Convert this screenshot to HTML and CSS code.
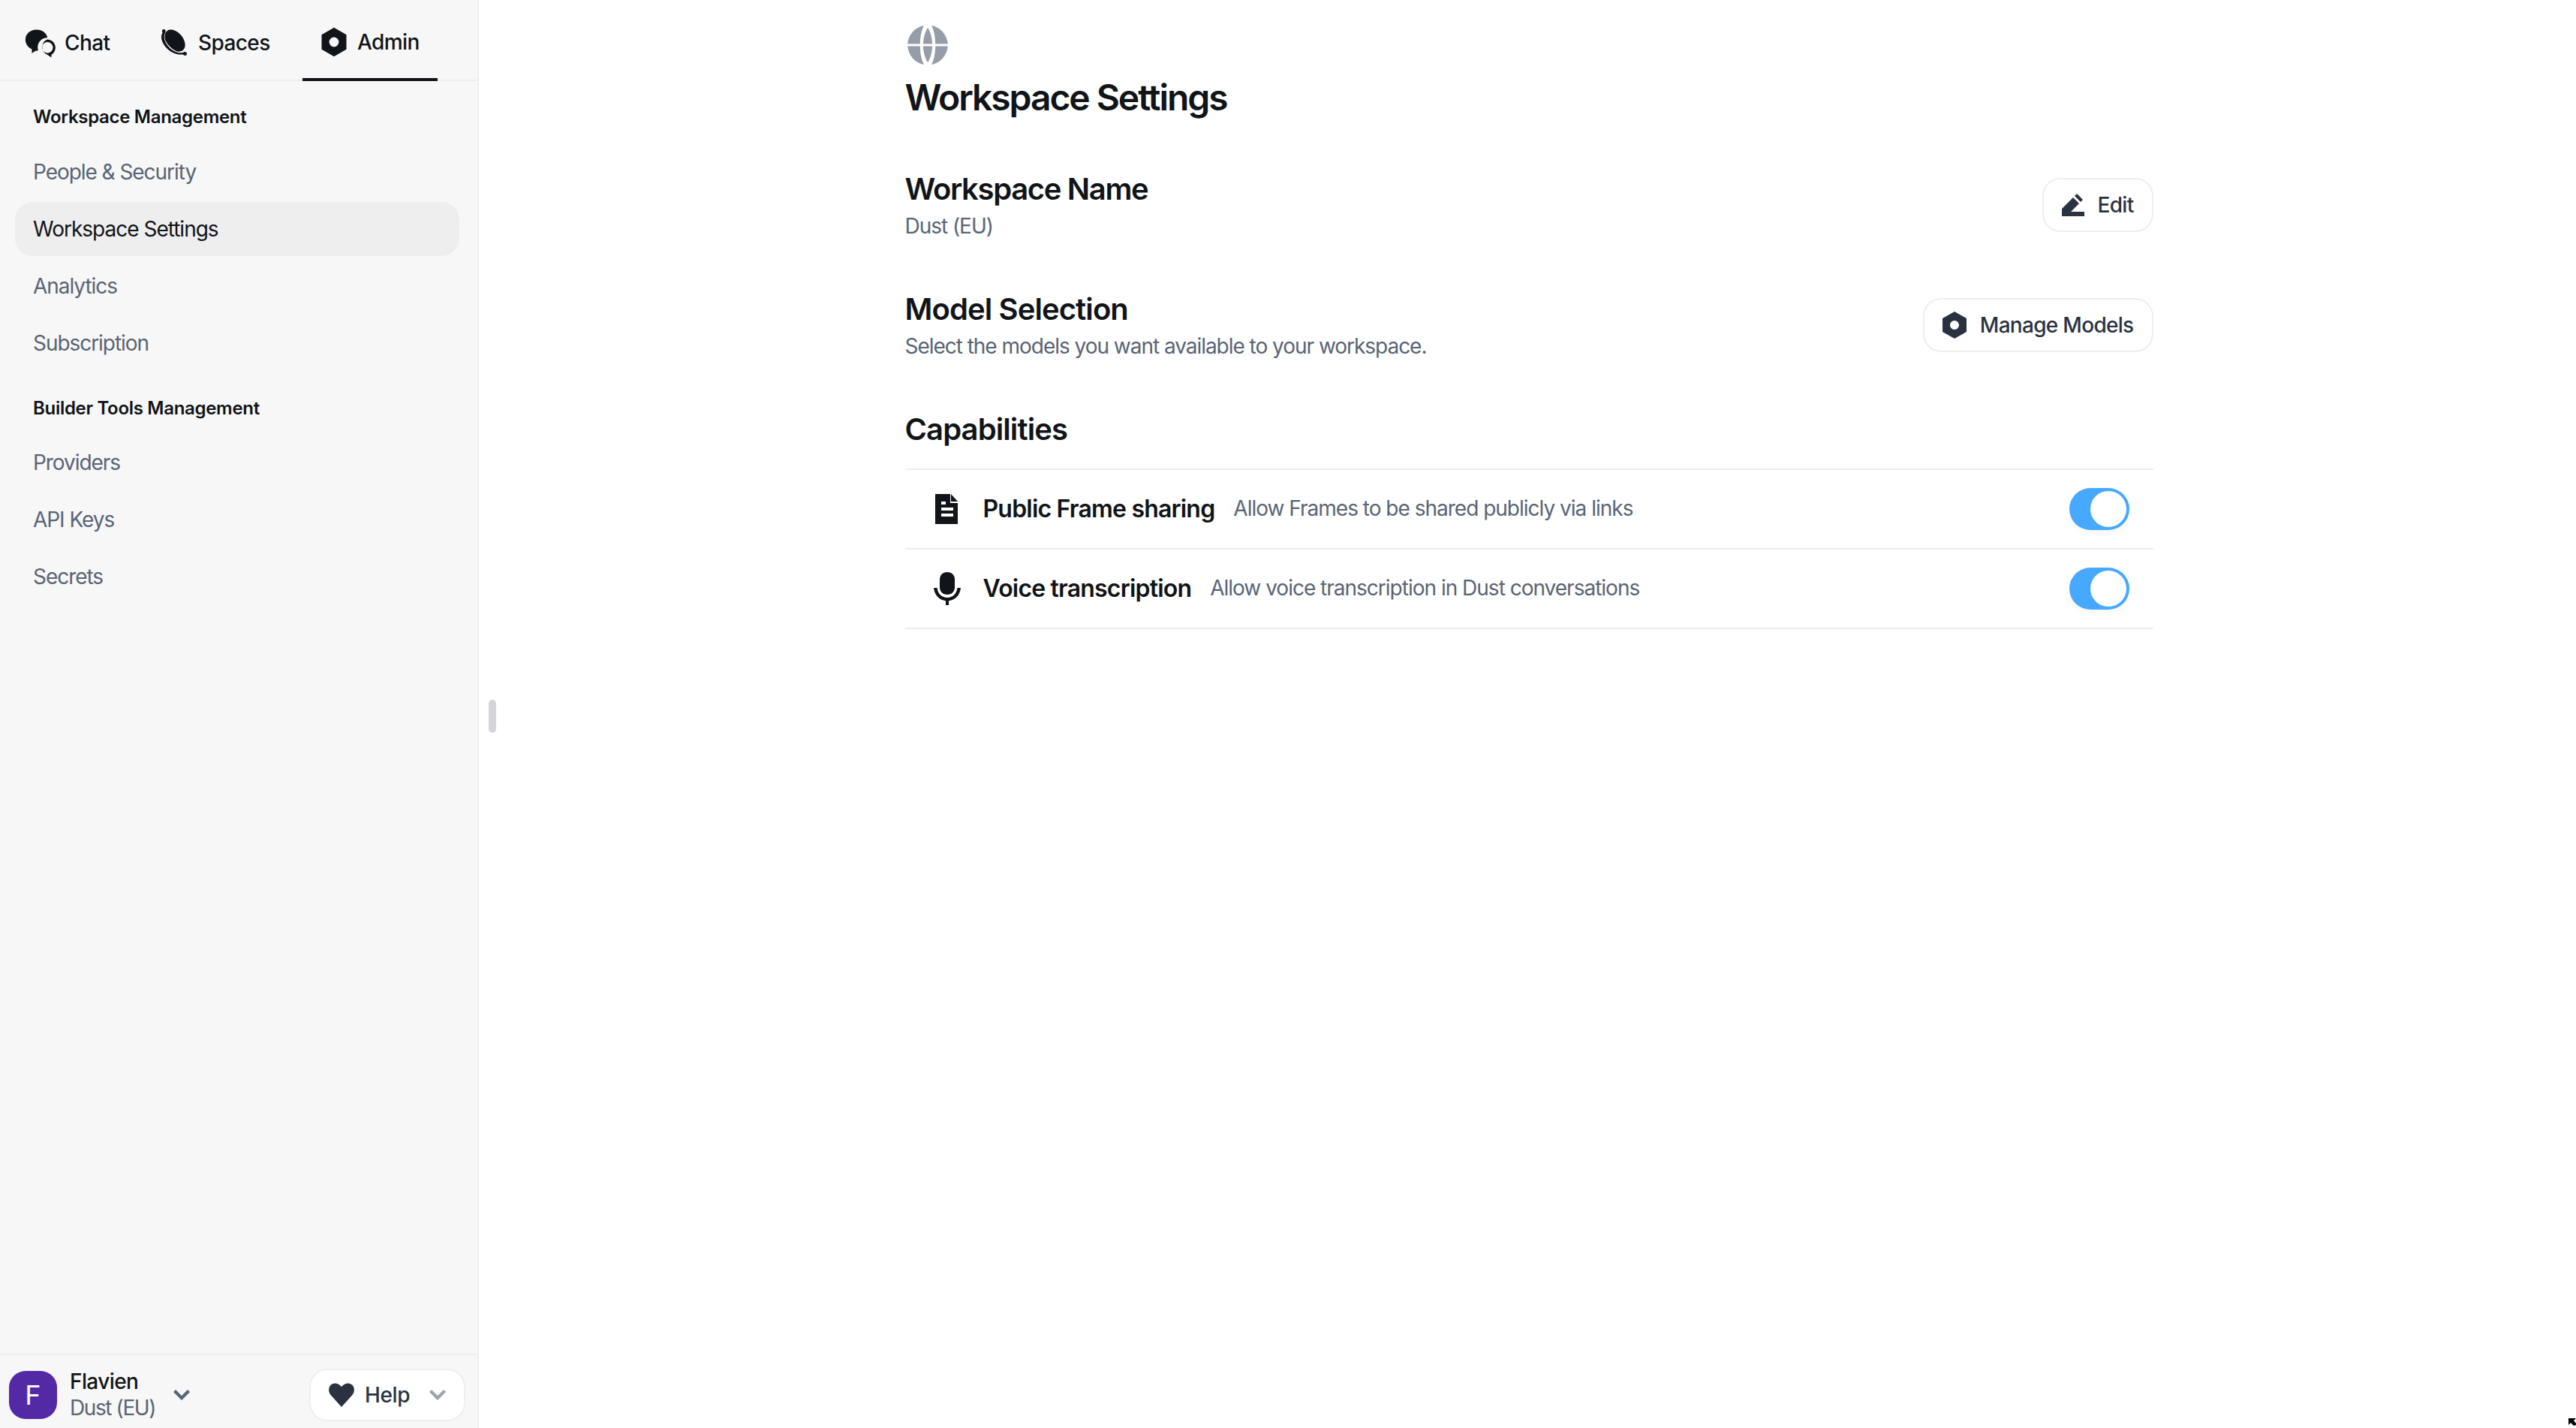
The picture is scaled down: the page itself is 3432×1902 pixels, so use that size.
FILE: index.html
```html
<!DOCTYPE html>
<html lang="en">
<head>
<meta charset="utf-8">
<title>Workspace Settings</title>
<link rel="stylesheet" href="styles.css">
</head>
<body>
<div class="app">
  <aside class="sidebar">
    <nav class="tabs">
      <a class="tab tab-chat">
        <svg class="tab-icon" viewBox="0 0 24 24"><path d="M9 2.500c4.200 0 7.600 2.600 8 5.800a7 7 0 0 0-6.700 9.300l-2 .3-2.600 1.800v-3C2.800 15.400 1 12.500 1 9.800 1 5.500 4.600 2.500 9 2.500z"/><path fill-rule="evenodd" d="M17 9.500a6 6 0 0 1 3 11.100l-.2 2.100-3.200-2.200a6 6 0 0 1 .4-11zm0 2a4 4 0 1 0 0 8 4 4 0 0 0 0-8z"/></svg>
        <span>Chat</span>
      </a>
      <a class="tab tab-spaces">
        <svg class="tab-icon" viewBox="0 0 24 24"><path d="M7 3.300C9 1.800 13 2.400 16.300 5.700c3.300 3.300 4.500 7.700 3.200 10.300-1 2-3.800 3.400-6.800 1.600C9.400 15.700 6.800 13 5.500 9.800 4.700 7.500 5.300 4.600 7 3.300z"/><path d="M4.200 3.500l1.600.9C3.700 7 4.800 11.700 8.500 15.400c3.700 3.700 8.500 4.900 11.200 3l.8 1.500c-.9.600-2.100.900-3 .600-4 .3-8.200-1.700-11-4.700C3.500 12.700 1.800 8.200 3.200 5.500c.2-.7.6-1.500 1-2z"/><circle cx="4.500" cy="3.500" r="1.300"/><circle cx="20" cy="20" r="1.300"/></svg>
        <span>Spaces</span>
      </a>
      <a class="tab tab-admin is-active">
        <svg class="tab-icon" viewBox="0 0 24 24"><path fill-rule="evenodd" d="M12 1.500l9 5.200v10.600l-9 5.200-9-5.200V6.700zm0 7a3.500 3.500 0 1 0 0 7 3.500 3.500 0 0 0 0-7z"/></svg>
        <span>Admin</span>
      </a>
    </nav>
    <div class="menu">
      <div class="menu-title">Workspace Management</div>
      <a class="menu-item">People &amp; Security</a>
      <a class="menu-item is-selected">Workspace Settings</a>
      <a class="menu-item">Analytics</a>
      <a class="menu-item">Subscription</a>
      <div class="menu-title menu-title-next">Builder Tools Management</div>
      <a class="menu-item">Providers</a>
      <a class="menu-item">API Keys</a>
      <a class="menu-item">Secrets</a>
    </div>
    <footer class="foot">
      <div class="user">
        <div class="avatar">F</div>
        <div class="user-text">
          <div class="user-name">Flavien</div>
          <div class="user-org">Dust (EU)</div>
        </div>
        <svg class="chev chev-user" viewBox="0 0 22 14"><path d="M0 3l3-3 8 8 8-8 3 3-11 11z"/></svg>
      </div>
      <button class="help">
        <svg class="heart" viewBox="0 0 34 32"><path d="M17 32L3 16.500C-1 12-.5 6 2.500 3c3.500-3.500 9.500-3.500 14.500 2 5-5.500 11-5.500 14.500-2 3 3 3.500 9-.5 13.500z"/></svg>
        <span>Help</span>
        <svg class="chev chev-help" viewBox="0 0 22 14"><path d="M0 3l3-3 8 8 8-8 3 3-11 11z"/></svg>
      </button>
    </footer>
  </aside>
  <div class="gutter"><div class="grip"></div></div>
  <main class="main">
    <div class="content">
      <svg class="globe" viewBox="0 0 54 54"><path d="M22 1C18.500 7 17 16 16.800 25.500H.2C1.200 13 10.500 3 22 1z"/><path d="M27 4c3.500 5 5.800 13 6 21.500H21C21.200 17 23.500 9 27 4z"/><path d="M32 1c3.500 6 5 15 5.200 24.500h16.600C52.800 13 43.500 3 32 1z"/><path d="M22 53c-3.500-6-5-15-5.200-24.500H.2C1.200 41 10.500 51 22 53z"/><path d="M27 50c3.500-5 5.800-13 6-21.500H21c.2 8.500 2.500 16.500 6 21.500z"/><path d="M32 53c3.500-6 5-15 5.200-24.500h16.600C52.800 41 43.500 51 32 53z"/></svg>
      <h1 class="page-title">Workspace Settings</h1>
      <section class="section section-name">
        <div>
          <h2 class="section-title">Workspace Name</h2>
          <p class="section-sub">Dust (EU)</p>
        </div>
        <button class="btn">
          <svg class="btn-icon-edit" viewBox="0 0 30 30"><path d="M0 20L15 5l8 8-11 11h18v6H0z"/><path d="M20 0l8 8-3 3-8-8z"/></svg>
          <span>Edit</span>
        </button>
      </section>
      <section class="section section-model">
        <div>
          <h2 class="section-title">Model Selection</h2>
          <p class="section-sub">Select the models you want available to your workspace.</p>
        </div>
        <button class="btn">
          <svg class="btn-icon-hex" viewBox="0 0 32 36"><path fill-rule="evenodd" d="M16 0l16 9v18l-16 9-16-9V9zm0 12a6 6 0 1 0 0 12 6 6 0 0 0 0-12z"/></svg>
          <span>Manage Models</span>
        </button>
      </section>
      <h2 class="section-title caps-title">Capabilities</h2>
      <ul class="caps">
        <li class="cap">
          <svg class="cap-icon" viewBox="0 0 36 40"><path fill-rule="evenodd" d="M2 0h20v12h10v28H2zM10 10v4h6v-4zM10 18v4h16v-4zM10 26v4h16v-4zM23 0l9 10h-9z"/></svg>
          <span class="cap-name">Public Frame sharing</span>
          <span class="cap-desc">Allow Frames to be shared publicly via links</span>
          <span class="toggle"><span class="knob"></span></span>
        </li>
        <li class="cap">
          <svg class="cap-icon" viewBox="0 0 36 44"><path d="M18 0c6 0 10 4 10 10v10c0 6-4 10-10 10S8 26 8 20V10C8 4 12 0 18 0z"/><path d="M0 21h4.500c1 8 6.500 13 13.500 13s12.500-5 13.500-13H36c-1 9.500-7 16-16 17.300V44h-4v-5.700C7 37 1 30.500 0 21z"/></svg>
          <span class="cap-name">Voice transcription</span>
          <span class="cap-desc">Allow voice transcription in Dust conversations</span>
          <span class="toggle"><span class="knob"></span></span>
        </li>
      </ul>
    </div>
  </main>
</div>
<svg class="cursor" viewBox="0 0 15 14"><path d="M0 0h15v14H0z" fill="#fff"/><path d="M5 1h10l-3 3 3 4v2l-3 1-4-4-3 3z" fill="#000"/></svg>
</body>
</html>
```
FILE: styles.css
```css
* { box-sizing: border-box; }
html, body { margin: 0; height: 100%; }
body {
  font-family: "Inter", "Liberation Sans", sans-serif;
  color: #111418;
  background: #fff;
  overflow: hidden;
}
h1, h2, p, ul { margin: 0; padding: 0; }
ul { list-style: none; }
button { font: inherit; background: none; cursor: pointer; }
svg { display: block; flex: none; fill: currentColor; }

.app { display: flex; height: 1902px; }

/* sidebar */
.sidebar {
  width: 638px;
  flex: none;
  display: flex;
  flex-direction: column;
  background: #f7f7f7;
  box-shadow: inset -2px 0 0 #eeeef0;
}
.tabs {
  display: flex;
  height: 108px;
  padding-left: 32px;
  border-bottom: 2px solid #eeeeef;
  margin-right: 2px;
}
.tab {
  display: flex;
  align-items: center;
  gap: 10px;
  height: 108px;
  font-size: 28px;
  font-weight: 500;
  letter-spacing: -0.6px;
  padding-top: 6px;
}
.tab-icon { width: 44px; height: 44px; }
.tab-chat { width: 180px; }
.tab-spaces { width: 191px; gap: 10px; }
.tab-spaces .tab-icon { margin-left: -2px; }
.tab-admin {
  width: 180px;
  padding-left: 20px;
  padding-top: 8px;
  border-bottom: 4px solid #111418;
  gap: 9px;
}

.menu { flex: 1; padding: 31px 26px 0 20px; }
.menu-title {
  height: 34px;
  line-height: 34px;
  padding-left: 24px;
  font-size: 24px;
  font-weight: 600;
  letter-spacing: -0.3px;
  margin-bottom: 20px;
}
.menu-title-next { margin-top: 34px; margin-bottom: 19px; }
.menu-item {
  display: block;
  height: 72px;
  margin-bottom: 4px;
  padding-left: 24px;
  line-height: 72px;
  font-size: 28px;
  letter-spacing: -1.05px;
  color: #596475;
  border-radius: 24px;
}
.menu-item.is-selected { background: #eeeeef; color: #111418; letter-spacing: -1px; }

.foot {
  height: 99px;
  display: flex;
  justify-content: space-between;
  align-items: center;
  border-top: 2px solid #eeeeef;
  margin-right: 2px;
  padding: 8px 16px 0 12px;
}
.user { display: flex; align-items: center; }
.avatar {
  width: 64px;
  height: 64px;
  border-radius: 22px;
  background: #5329a5;
  color: #fff;
  font-size: 36px;
  font-weight: 400;
  line-height: 64px;
  text-align: center;
}
.user-text { margin-left: 17px; width: 138px; }
.user-name { font-size: 28px; font-weight: 500; line-height: 34px; letter-spacing: -0.6px; }
.user-org { font-size: 28px; line-height: 36px; color: #596475; letter-spacing: -1.4px; }
.chev { width: 22px; height: 14px; }
.chev-user { color: #596475; }
.help {
  display: flex;
  align-items: center;
  width: 208px;
  height: 70px;
  padding: 0 0 0 24px;
  background: #fff;
  border: 2px solid #eeeeef;
  border-radius: 24px;
  font-size: 28px;
  font-weight: 500;
  letter-spacing: -0.4px;
  color: #2a3241;
}
.heart { width: 34px; height: 32px; margin-right: 14px; }
.chev-help { color: #9da3ae; margin-left: 26px; }

.gutter { width: 0; position: relative; }
.grip {
  position: absolute;
  left: 13px;
  top: 932px;
  width: 10px;
  height: 44px;
  border-radius: 5px;
  background: #d3d5d9;
}

/* main */
.main { flex: 1; display: flex; justify-content: center; padding-left: 4px; }
.content { width: 1663px; padding-top: 33px; }
.globe { width: 54px; height: 54px; margin-left: 3px; color: #969ca8; }
.page-title {
  font-size: 48px;
  line-height: 60px;
  margin-top: 13px;
  font-weight: 600;
  letter-spacing: -2.05px;
}
.section {
  display: flex;
  justify-content: space-between;
  align-items: center;
  height: 94px;
}
.section-name { margin-top: 66px; }
.section-name .section-title { letter-spacing: -1.35px; }
.section-model { margin-top: 66px; }
.section-title { font-size: 40px; line-height: 52px; font-weight: 600; letter-spacing: -0.9px; }
.section-sub { margin-top: 4px; font-size: 28px; line-height: 38px; color: #596475; letter-spacing: -1.03px; }
.btn {
  display: flex;
  align-items: center;
  gap: 18px;
  height: 72px;
  padding: 0 24px;
  background: #fff;
  border: 2px solid #eeeeef;
  border-radius: 24px;
  font-size: 28px;
  font-weight: 500;
  letter-spacing: -0.7px;
  color: #2a3241;
}
.btn-icon-edit { width: 30px; height: 30px; }
.btn-icon-hex { width: 32px; height: 36px; }
.caps-title { margin-top: 66px; }
.caps { margin-top: 26px; border-top: 2px solid #eeeeef; }
.cap {
  display: flex;
  align-items: center;
  height: 106px;
  border-bottom: 2px solid #eeeeef;
  position: relative;
  padding-left: 38px;
}
.cap-icon { width: 36px; height: 44px; margin-right: 30px; }
.cap-name { margin-top: -2px; font-size: 32px; font-weight: 600; letter-spacing: -0.8px; }
.cap-desc { margin-top: -2px; margin-left: 25px; font-size: 28px; color: #596475; letter-spacing: -1px; }
.toggle {
  margin-left: auto;
  margin-right: 32px;
  width: 80px;
  height: 56px;
  padding: 4px;
  display: flex;
  justify-content: flex-end;
  border-radius: 28px;
  background: #47a8ff;
  box-shadow: 0 4px 10px rgba(0, 0, 0, 0.04);
}
.knob { width: 48px; height: 48px; border-radius: 50%; background: #fff; }
.cursor { position: absolute; right: 0; bottom: 0; width: 15px; height: 14px; }
```
